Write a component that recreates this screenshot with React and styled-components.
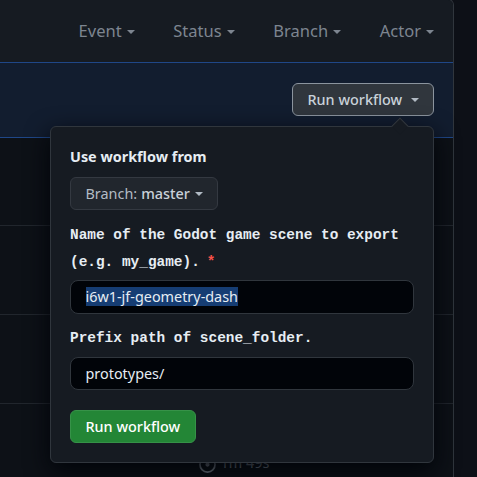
import React from "react";
import styled, { createGlobalStyle } from "styled-components";

const Global = createGlobalStyle`
  *, *::before, *::after { box-sizing: border-box; }
  html, body { margin: 0; background: #0d1117; overflow: hidden; }
  button, input { font: inherit; margin: 0; }
`;

const Page = styled.div`
  width: 477px;
  height: 477px;
  overflow: hidden;
  background: #0d1017;
  font: 14.4px/20px "Noto Sans", sans-serif;
  color: #e6edf3;
`;

const RunsTable = styled.main`
  width: 454px;
  height: 478px;
  margin-top: -1px;
  border-top: 1px solid #30363d;
  border-right: 1px solid #30363d;
  border-top-right-radius: 6px;
  background: #0d1117;
`;

const FilterBar = styled.header`
  height: 62px;
  display: flex;
  justify-content: flex-end;
  align-items: center;
  gap: 38.7px;
  padding-right: 19px;
  background: #161b22;
  border-top-right-radius: 5px;
`;

const Filter = styled.button`
  display: flex;
  align-items: center;
  gap: 5px;
  padding: 0;
  border: 0;
  background: none;
  color: #7d8590;
  font-size: 16.5px;
  line-height: 24px;
`;

const Caret = styled.span`
  width: 0;
  height: 0;
  margin-top: 1px;
  border: 4px solid transparent;
  border-bottom: 0;
  border-top-color: currentColor;
`;

const DispatchBanner = styled.section`
  position: relative;
  height: 76px;
  display: flex;
  justify-content: flex-end;
  align-items: flex-start;
  padding: 20px 19px 0 0;
  background: #121d2f;
  border-top: 1px solid #1f4788;
  border-bottom: 1px solid #1f4788;
`;

const Button = styled.button`
  height: 33px;
  flex-shrink: 0;
  display: inline-flex;
  align-items: center;
  padding: 0 14.5px;
  border: 1px solid ${(p) => p.$border};
  border-radius: 6px;
  background: ${(p) => p.$fill};
  color: ${(p) => p.$color || "#c9d1d9"};
  width: ${(p) => p.$width}px;
  font-weight: 500;
  line-height: 20px;
  white-space: nowrap;

  ${Caret} {
    margin-left: ${(p) => p.$gap || 0}px;
    color: #b1bac4;
  }
`;

const Popover = styled.form`
  position: absolute;
  z-index: 2;
  top: 63px;
  right: 19px;
  width: 384px;
  height: 337px;
  display: flex;
  flex-direction: column;
  align-items: flex-start;
  padding: 20px 19px 0;
  border: 1px solid #30363d;
  border-radius: 6px;
  background: #161b22;
  box-shadow: 0 8px 24px #010409;

  &::before {
    content: "";
    position: absolute;
    top: -7px;
    right: 27px;
    width: 12px;
    height: 12px;
    transform: rotate(45deg);
    border: 1px solid #30363d;
    border-right: 0;
    border-bottom: 0;
    background: #161b22;
  }
`;

const Heading = styled.strong`
  font-weight: 700;
  line-height: 20px;
  margin-bottom: 10px;
`;

const Light = styled.span`
  font-weight: 400;
  color: #b3bbc4;
  margin-right: 4px;
`;

const FieldLabel = styled.label`
  flex-shrink: 0;
  margin-top: ${(p) => p.$top}px;
  height: ${(p) => p.$height}px;
  font: bold 14.43px/27px "Liberation Mono", monospace;
`;

const Required = styled.span`
  margin-left: 6.8px;
  color: #f85149;
`;

const Field = styled.div`
  width: 344px;
  height: ${(p) => p.$height}px;
  flex-shrink: 0;
  display: flex;
  align-items: center;
  padding: 0 14.5px;
  border: 1px solid #30363d;
  border-radius: 8px;
  background: #010409;
`;

const Selected = styled.span`
  height: 19px;
  margin-bottom: 1px;
  line-height: 19px;
  background: #163d73;
`;

const Submit = styled.div`
  margin-top: 20px;
  display: flex;
`;

const Run = styled.div`
  height: ${(p) => p.$height}px;
  border-bottom: 1px solid #21262d;
`;

const LastRun = styled.div`
  height: 73px;
  display: flex;
  align-items: flex-end;
  gap: 4.5px;
  padding: 0 0 4px 199px;
  color: #7d8590;
`;

const filters = ["Event", "Status", "Branch", "Actor"];

function StopwatchIcon() {
  return (
    <svg width="17" height="17" viewBox="0 0 16 16" fill="none" stroke="currentColor" strokeWidth="1.6">
      <circle cx="8" cy="8" r="7.1" />
      <path d="M8 4.5v3" strokeLinecap="round" />
      <circle cx="8" cy="8" r="1.2" fill="currentColor" />
    </svg>
  );
}

export default function App() {
  return (
    <Page>
      <Global />
      <RunsTable>
        <FilterBar>
          {filters.map((name) => (
            <Filter key={name}>{name}<Caret /></Filter>
          ))}
        </FilterBar>
        <DispatchBanner>
          <Button $width={142} $gap={9} $border="#8b949e" $fill="#30363d">
            Run workflow<Caret />
          </Button>
          <Popover>
            <Heading>Use workflow from</Heading>
            <Button type="button" $width={148} $gap={5} $border="#343941" $fill="#21262d">
              <Light>Branch:</Light>master<Caret />
            </Button>
            <FieldLabel $top={12} $height={58}>
              Name of the Godot game scene to export<br />
              (e.g. my_game).<Required>*</Required>
            </FieldLabel>
            <Field $height={34}><Selected>i6w1-jf-geometry-dash</Selected></Field>
            <FieldLabel $top={11} $height={32}>Prefix path of scene_folder.</FieldLabel>
            <Field $height={33}>prototypes/</Field>
            <Submit>
              <Button type="button" $width={126} $border="#369248" $fill="#238636" $color="#fff">
                Run workflow
              </Button>
            </Submit>
          </Popover>
        </DispatchBanner>
        <Run $height={88} />
        <Run $height={89} />
        <Run $height={89} />
        <LastRun><StopwatchIcon />1m 49s</LastRun>
      </RunsTable>
    </Page>
  );
}
